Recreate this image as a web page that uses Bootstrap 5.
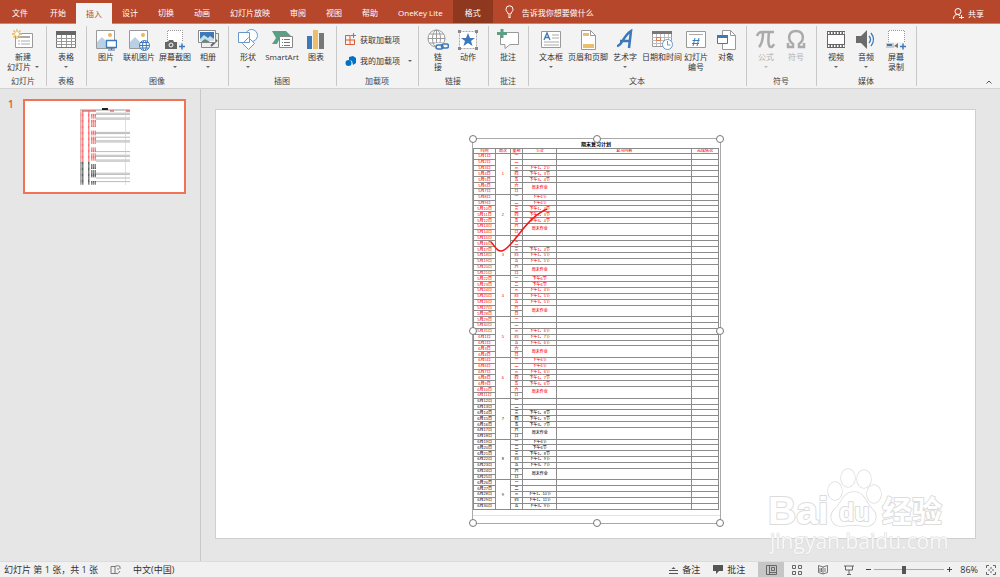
<!DOCTYPE html>
<html lang="zh-CN">
<head>
<meta charset="utf-8">
<meta name="viewport" content="width=device-width, initial-scale=1">
<title>演示文稿</title>
<link href="https://cdn.jsdelivr.net/npm/bootstrap@5.3.0/dist/css/bootstrap.min.css" rel="stylesheet">
<style>
body{font:8px/10px "Open Sans","Noto Sans CJK SC",sans-serif;color:#333;background:#e6e6e6}
button,input{font:inherit;color:inherit}
svg{display:block;flex:none}
.topbar{background:#b7472a;color:#fff;height:24px;border-bottom:1px solid #d08470}
.topbar .nav-link{color:#fff;padding:2px 10px 0;height:23px;display:flex;align-items:center;font-size:8px}
.topbar .first-tab{padding:2px 12px 0}
.topbar .nav-link.active{background:#f3f3f3;color:#b7472a;margin-top:3px;height:21px;padding:0 10px}
.topbar .context-tab{background:#8f3820;padding:2px 12px 0}
.tell{background:none;border:0;color:#fff;width:110px;padding:2px 0 0;outline:0}
.tell::placeholder{color:#fff;opacity:1}
.plain{background:none;border:0;padding:0}
.ribbon{background:#f3f3f3;height:65px;border-bottom:1px solid #d2d2d2;padding-left:1px}
.group{padding:3px 5px 0 4px;border-right:1px solid #c8c8c8;margin:2px 0;height:60px}
.group-name{text-align:center;height:10px;color:#444;white-space:nowrap}
.tool{background:none;border:0;padding:0;width:30px;display:flex;flex-direction:column;align-items:center;white-space:nowrap;line-height:10px}
.tool svg{margin-bottom:1px}
.tool.mid{width:36px}
.tool.wide{width:38px}
.tool:disabled{color:#b1b1b1}
.arrow{display:block;border:2px solid transparent;border-top-color:#666;border-bottom:0}
.tool>.arrow{margin-top:4px}
.tool:disabled .arrow{border-top-color:#bbb}
.addins{width:72px}
.thumbs{width:201px;border-right:1px solid #c9c9c9;padding:10px 14px 10px 8px}
.thumb-no{width:15px;color:#e0593a;font-size:10px;font-weight:600}
.thumb{background:#fff;border:2px solid #f07355;height:95px;flex:1;display:flex;justify-content:center;padding-top:7px}
.stage{padding:20px 24px 22px 14px}
.slide{background:#fff;border:1px solid #cfcfcf}
.object{left:34%;margin-left:-1px;top:29px;width:247px;height:384px;outline:1px solid #aaa}
.plan{width:246px;height:362px;margin:0;table-layout:fixed;border-collapse:collapse;font:4px/4px "Liberation Sans","Noto Sans CJK SC",sans-serif;color:#111;text-align:center}
.plan caption{caption-side:top;padding:2px 0 1px;height:9px;font:bold 5px/6px "Noto Sans CJK SC",sans-serif;color:#000;text-align:center}
.plan th,.plan td{padding:0;border:1px solid #8b8b8b;font-weight:500;overflow:hidden;white-space:nowrap}
.plan .due{color:#f00}
.blank{height:6px;border-bottom:1px solid #e4e4e4}
.grip{width:8px;height:8px;border:1px solid #777;border-radius:50%;background:#fff;transform:translate(-50%,-50%)}
.tick{left:16px;top:66px}
.watermark{right:23px;bottom:4px;pointer-events:none}
.status{background:#f1f1f1;height:16px;border-top:1px solid #dcdcdc;font-size:9px}
.note{margin-right:13px}
.view{width:26px;height:16px;display:flex;align-items:center;justify-content:center;background:none;border:0;padding:0}
.view.on{background:#c6c6c6}
.zoomer{appearance:none;width:70px;height:9px;margin:0 3px;background:linear-gradient(#aaa,#aaa) center/100% 1px no-repeat}
.zoomer::-webkit-slider-thumb{appearance:none;width:4px;height:8px;background:#555}
</style>
</head>
<body class="d-flex flex-column min-vh-100">
<header>
<nav class="topbar d-flex" aria-label="功能区">
  <div class="nav flex-nowrap text-nowrap">
    <a class="nav-link first-tab" href="#">文件</a><a class="nav-link" href="#">开始</a><a class="nav-link active" href="#">插入</a><a class="nav-link" href="#">设计</a><a class="nav-link" href="#">切换</a><a class="nav-link" href="#">动画</a><a class="nav-link" href="#">幻灯片放映</a><a class="nav-link" href="#">审阅</a><a class="nav-link" href="#">视图</a><a class="nav-link" href="#">帮助</a><a class="nav-link" href="#">OneKey Lite</a><a class="nav-link context-tab" href="#">格式</a>
  </div>
  <label class="d-flex align-items-center gap-2 ms-2 ps-1">
    <svg width="9" height="13" viewBox="0 0 9 13" fill="none" stroke="#fff"><path d="M3 9V8C2 6.500 1 6 1 4.300A3.500 3.500 0 0 1 8 4.300C8 6 7 6.500 6 8v1zM3 11h3M3.500 12.500h2"/></svg>
    <input class="tell" placeholder="告诉我你想要做什么" aria-label="告诉我你想要做什么">
  </label>
  <button class="plain text-white d-flex align-items-center gap-1 ms-auto me-3 pt-1"><svg width="11" height="11" viewBox="0 0 11 11" fill="none" stroke="#fff"><circle cx="5" cy="3.500" r="3"/><path d="M.5 11C.5 8 2 6.500 4.500 6.500L7 7.500M6 9.500h5M8.500 7v4"/></svg>共享</button>
</nav>
<div class="ribbon d-flex">
  <section class="group d-flex flex-column justify-content-between">
    <div class="d-flex"><button class="tool mid"><svg width="22" height="22" viewBox="0 0 22 22"><path d="M3.500 4.500h17v14h-17z" fill="#fff" stroke="#999"/><path d="M6 8h12" stroke="#aaa" stroke-width="2"/><path d="M6 12h2m1 0h9M6 15h2m1 0h9" stroke="#aaa"/><path d="M5 0v10M0 5h10M1.500 1.500l7 7M8.500 1.500l-7 7" stroke="#e9b659" stroke-width="1.300"/><circle cx="5" cy="5" r="2" fill="#fff"/></svg>新建<span class="d-flex align-items-center gap-1">幻灯片<i class="arrow"></i></span></button></div>
    <div class="group-name">幻灯片</div>
  </section>
  <section class="group d-flex flex-column justify-content-between">
    <div class="d-flex"><button class="tool"><svg width="22" height="22" viewBox="0 0 22 22"><path d="M1.500 2.500h19v16h-19z" fill="#fff" stroke="#777"/><path d="M1 2h20v4H1z" fill="#666"/><path d="M1 9.500h20M1 12.500h20M1 15.500h20M6.500 6v12M11.500 6v12M16.500 6v12" stroke="#999"/></svg>表格<i class="arrow"></i></button></div>
    <div class="group-name">表格</div>
  </section>
  <section class="group d-flex flex-column justify-content-between">
    <div class="d-flex">
      <button class="tool"><svg width="22" height="22" viewBox="0 0 22 22"><path d="M1.500 1.500h18v18h-18z" fill="#fff" stroke="#999"/><path d="M2 19v-6l5-5 6 6v5z" fill="#b9cfe5"/><circle cx="15" cy="6" r="2" fill="#e9b659"/><path d="M11.500 11.500h10v7h-10z" fill="#fff" stroke="#3d79b8" stroke-width="1.300"/><path d="M16.500 19v2M13 21h7" stroke="#3d79b8"/></svg>图片</button>
      <button class="tool mid"><svg width="22" height="22" viewBox="0 0 22 22"><path d="M1.500 1.500h18v18h-18z" fill="#fff" stroke="#999"/><path d="M2 19v-6l5-5 6 6v5z" fill="#b9cfe5"/><circle cx="15" cy="6" r="2" fill="#e9b659"/><g fill="#fff" stroke="#3d79b8"><circle cx="16.500" cy="16.500" r="5"/><ellipse cx="16.500" cy="16.500" rx="2" ry="5"/><path d="M11.500 16.500h10M12.500 13.500h8M12.500 19h8"/></g></svg>联机图片</button>
      <button class="tool mid"><svg width="22" height="22" viewBox="0 0 22 22"><path d="M3.500 13V1.500h15V13" fill="#fff" stroke="#999" stroke-dasharray="1 1"/><path d="M1 13h3l1-2h4l1 2h3v7H1z" fill="#666"/><circle cx="7" cy="16" r="2" fill="#666" stroke="#fff"/><path d="M15 17.500h6M18 14.500v6" stroke="#3d79b8" stroke-width="1.500"/></svg>屏幕截图<i class="arrow"></i></button>
      <button class="tool"><svg width="22" height="22" viewBox="0 0 22 22"><path d="M4.500 4.500h17v14h-17z" fill="#eee" stroke="#888"/><path d="M14 17l6-6" stroke="#666" stroke-width="2"/><path d="M1.500 1.500h17v12h-17z" fill="#fff" stroke="#888"/><path d="M3 3h14v7H3z" fill="#3d79b8"/><path d="M3 10l4-4 4 3 2-2 4 3v2H3z" fill="#cbdce9"/><path d="M4 13l4-3 5 3z" fill="#4e9277"/></svg>相册<i class="arrow"></i></button>
    </div>
    <div class="group-name">图像</div>
  </section>
  <section class="group d-flex flex-column justify-content-between">
    <div class="d-flex">
      <button class="tool"><svg width="22" height="22" viewBox="0 0 22 22" fill="#fff" stroke="#6a99c9"><circle cx="14.500" cy="6.500" r="6"/><path d="M1.500 3.500h11v10h-11zM11.500 8.500l6 6-6 6-6-6z"/></svg>形状<i class="arrow"></i></button>
      <button class="tool wide"><svg width="22" height="22" viewBox="0 0 22 22"><path d="M1 2h14l5 5H10l-4 8H1l4-6z" fill="#5b9f85"/><path d="M8.500 7.500h13v11h-13z" fill="#fff" stroke="#888"/><path d="M11 10.500h1m1 0h6m-8 3h1m1 0h6m-8 3h1m1 0h6" stroke="#777"/></svg>SmartArt</button>
      <button class="tool"><svg width="22" height="22" viewBox="0 0 22 22"><path d="M2 7h5v13H2z" fill="#3d79b8"/><path d="M8 1h5v19H8z" fill="#e9bf6c"/><path d="M14 4h5v16h-5z" fill="#777"/></svg>图表</button>
    </div>
    <div class="group-name">插图</div>
  </section>
  <section class="group d-flex flex-column justify-content-between">
    <div class="addins d-flex flex-column align-items-start gap-2 ps-1 text-nowrap">
      <button class="plain d-flex align-items-center gap-1 pt-1"><svg width="11" height="13" viewBox="0 0 11 13" fill="none" stroke="#dc5b32"><path d="M5.500 2.500h-5v9h9v-5M.5 7h9M5 2.500v9M8.500 0v5M6 2.500h5"/></svg>获取加载项</button>
      <button class="plain d-flex align-items-center gap-1"><svg width="11" height="13" viewBox="0 0 11 13"><path d="M4 3l4-1 3 2v5l-3 2-1-4-3-1z" fill="#0072c6"/><circle cx="3.500" cy="9" r="3" fill="#0072c6"/></svg>我的加载项<i class="arrow ms-1"></i></button>
    </div>
    <div class="group-name">加载项</div>
  </section>
  <section class="group d-flex flex-column justify-content-between">
    <div class="d-flex">
      <button class="tool"><svg width="22" height="22" viewBox="0 0 22 22" fill="none"><g stroke="#999"><circle cx="9.500" cy="9.500" r="8.500" fill="#fff"/><ellipse cx="9.500" cy="9.500" rx="4" ry="8.500"/><path d="M1 9.500h17M2.500 5h14M2.500 14h14M9.500 1v17"/></g><path d="M8 14h14v8H8z" fill="#f3f3f3"/><g stroke="#3d79b8" stroke-width="1.600"><rect x="9" y="16" width="7" height="4" rx="2"/><rect x="14.500" y="15" width="7" height="4" rx="2"/></g></svg>链<br>接</button>
      <button class="tool"><svg width="22" height="22" viewBox="0 0 22 22"><path d="M2.500 2.500h17v17h-17z" fill="#fff" stroke="#aaa" stroke-dasharray="2 1"/><path d="M1 1h3v3H1zM18 1h3v3h-3zM1 18h3v3H1zM18 18h3v3h-3z" fill="#888"/><path d="M11 4l2 5h5l-4 3 1.500 5-4.500-3-4.500 3L8 12 4 9h5z" fill="#3d79b8"/></svg>动作</button>
    </div>
    <div class="group-name">链接</div>
  </section>
  <section class="group d-flex flex-column justify-content-between">
    <div class="d-flex"><button class="tool"><svg width="22" height="22" viewBox="0 0 22 22"><path d="M3.500 3.500h18v12H13l-5 4v-4H3.500z" fill="#fff" stroke="#999"/><path d="M5 0v9M0 4.500h10" stroke="#5b9f85" stroke-width="3"/></svg>批注</button></div>
    <div class="group-name">批注</div>
  </section>
  <section class="group d-flex flex-column justify-content-between">
    <div class="d-flex">
      <button class="tool mid"><svg width="22" height="22" viewBox="0 0 22 22"><path d="M1.500 2.500h19v16h-19z" fill="#fff" stroke="#999"/><path d="M12 6h7M12 9h7M4 13h15M4 16h15" stroke="#aaa"/><path d="M4 11l3-7 3 7M5 8.500h4" fill="none" stroke="#3d79b8" stroke-width="1.300"/></svg>文本框<i class="arrow"></i></button>
      <button class="tool wide"><svg width="22" height="22" viewBox="0 0 22 22"><path d="M4.500 1.500h9l5 5v14h-14z" fill="#fff" stroke="#999"/><path d="M13.500 1.500v5h5" fill="none" stroke="#999"/><path d="M6 4h6v3H6zM6 15h11v4H6z" fill="#e9bf6c"/></svg>页眉和页脚</button>
      <button class="tool mid"><svg width="22" height="22" viewBox="0 0 22 22" fill="none" stroke="#3d79b8"><path d="M3 17c5 0 6-10 14-15l-2 17M6 12h10" stroke-width="2.500"/></svg>艺术字<i class="arrow"></i></button>
      <button class="tool wide"><svg width="22" height="22" viewBox="0 0 22 22"><path d="M1.500 2.500h19v15h-19z" fill="#fff" stroke="#999"/><path d="M1 2h20v3H1z" fill="#777"/><path d="M5.500 5v12M9.500 5v12M13.500 5v12M17.500 5v12M1 8.500h20M1 11.500h20M1 14.500h20" stroke="#bbb"/><path d="M5.500 8.500h4v3h-4z" fill="none" stroke="#dc7b52"/><circle cx="16.500" cy="15.500" r="5" fill="#fff" stroke="#6a99c9"/><path d="M16.500 12v4h3" fill="none" stroke="#6a99c9"/></svg>日期和时间</button>
      <button class="tool"><svg width="22" height="22" viewBox="0 0 22 22"><path d="M1.500 2.500h19v16h-19z" fill="#fff" stroke="#999"/><path d="M4 5.500h14" stroke="#aaa"/><path d="M10 9L8 17M14 9l-2 8M7.500 11.500h7M7 14.500h7" stroke="#3d79b8"/></svg>幻灯片<br>编号</button>
      <button class="tool"><svg width="22" height="22" viewBox="0 0 22 22"><path d="M7.500 1.500h8l5 5v14h-13z" fill="#fff" stroke="#999"/><path d="M15.500 1.500v5h5" fill="none" stroke="#999"/><path d="M2.500 6.500h10v8h-10z" fill="#fff" stroke="#3d79b8"/><path d="M2 6h11v3H2z" fill="#3d79b8"/></svg>对象</button>
    </div>
    <div class="group-name">文本</div>
  </section>
  <section class="group d-flex flex-column justify-content-between">
    <div class="d-flex">
      <button class="tool" disabled><svg width="22" height="22" viewBox="0 0 22 22" fill="none" stroke="#aaa" stroke-width="2.500"><path d="M2 7c1-3 2-4 5-4h12M8 3c0 8-1 12-4 15M14 3c-1 9-1 15 2 15 2 0 2-1 3-3"/></svg>公式<i class="arrow"></i></button>
      <button class="tool" disabled><svg width="22" height="22" viewBox="0 0 22 22" fill="none" stroke="#aaa" stroke-width="2.500"><path d="M3 14v4h5v-3c-6-4-5-13 3-13s9 9 3 13v3h5v-4"/></svg>符号</button>
    </div>
    <div class="group-name">符号</div>
  </section>
  <section class="group d-flex flex-column justify-content-between">
    <div class="d-flex">
      <button class="tool"><svg width="22" height="22" viewBox="0 0 22 22"><path d="M2 2h18v17H2z" fill="#666"/><path d="M3 6h16v9H3z" fill="#fff"/><path d="M3 4h17M3 17h17" stroke="#fff" stroke-width="2" stroke-dasharray="1.500 1.500"/></svg>视频<i class="arrow"></i></button>
      <button class="tool"><svg width="22" height="22" viewBox="0 0 22 22"><path d="M1 7h5l6-6v19l-6-6H1z" fill="#6b6b6b"/><path d="M14 7q3 3.500 0 7M16 4q5 6.500 0 13" fill="none" stroke="#3d79b8" stroke-width="1.300"/></svg>音频<i class="arrow"></i></button>
      <button class="tool"><svg width="22" height="22" viewBox="0 0 22 22"><path d="M3.500 13V1.500h16V13" fill="#fff" stroke="#999" stroke-dasharray="1 1"/><path d="M1 14h8v5H1z" fill="#ccc"/><path d="M2 15h5v2H2z" fill="#3d79b8"/><path d="M9 17l4-3v5z" fill="#777"/><path d="M15 17.500h6M18 14.500v6" stroke="#3d79b8" stroke-width="1.500"/></svg>屏幕<br>录制</button>
    </div>
    <div class="group-name">媒体</div>
  </section>
  <button class="plain ms-auto align-self-end me-1 pb-1 pe-1" aria-label="折叠功能区"><svg width="6" height="4" viewBox="0 0 6 4" fill="none" stroke="#555"><path d="M.5 3.500L3 1l2.500 2.500"/></svg></button>
</div>
</header>

<main class="d-flex flex-grow-1">
  <aside class="thumbs flex-shrink-0">
    <div class="d-flex"><span class="thumb-no">1</span><div class="thumb"><svg id="mini" width="50" height="78" viewBox="0 0 50 78" aria-hidden="true"></svg></div></div>
  </aside>
  <section class="stage flex-grow-1 d-flex position-relative">
    <div class="slide flex-grow-1 position-relative">
      <div class="object position-absolute">
        <table class="plan">
          <caption>期末复习计划</caption>
          <colgroup><col style="width:9%"><col style="width:6%"><col style="width:5%"><col style="width:14%"><col style="width:55%"><col style="width:11%"></colgroup>
          <thead><tr class="due"><th>时间</th><th>周次</th><th>星期</th><th>节次</th><th>复习内容</th><th>完成情况</th></tr></thead>
          <tbody id="days"></tbody>
        </table>
        <div class="blank"></div>
        <svg class="tick position-absolute" width="62" height="50" viewBox="0 0 62 50" fill="none" stroke="#f01818" stroke-width="1.500"><path d="M2 37c4 4 6 10 11 9C25 42 35 14 58 4"/></svg>
        <i class="grip position-absolute top-0 start-0"></i><i class="grip position-absolute top-0 start-50"></i><i class="grip position-absolute top-0 start-100"></i>
        <i class="grip position-absolute top-50 start-0"></i><i class="grip position-absolute top-50 start-100"></i>
        <i class="grip position-absolute top-100 start-0"></i><i class="grip position-absolute top-100 start-50"></i><i class="grip position-absolute top-100 start-100"></i>
      </div>
    </div>
    <svg class="watermark position-absolute" width="210" height="90" viewBox="0 0 210 90" fill="#fff" stroke="#dcdcdc" stroke-width="2" paint-order="stroke" stroke-linejoin="round">
      <text x="1" y="57" font-family="Liberation Sans" font-weight="bold" font-size="39">Bai</text>
      <g stroke-width="1.500"><ellipse cx="68" cy="24" rx="7" ry="9"/><ellipse cx="81" cy="11" rx="7" ry="9"/><ellipse cx="97" cy="12" rx="7" ry="9"/><ellipse cx="107" cy="27" rx="7" ry="9"/><path d="M87 25c-11 0-12 11-19 17-8 8-2 18 8 17q11-2 21 0c10 1 16-9 8-17-6-6-8-17-18-17z"/></g>
      <text x="72" y="54" font-family="Liberation Sans" font-weight="bold" font-size="25">du</text>
      <text x="115" y="55" font-family="Noto Sans CJK SC" font-weight="bold" font-size="30">经验</text>
      <text x="3" y="82" font-family="Open Sans" font-size="21" fill="#f8f8f8" stroke="#d9d9d9" stroke-width="1">jingyan.baidu.com</text>
    </svg>
  </section>
</main>

<footer class="status d-flex align-items-center text-nowrap">
  <span class="ps-1">幻灯片 第 1 张，共 1 张</span>
  <button class="plain ms-2 me-2 ps-1" aria-label="拼写检查"><svg width="11" height="10" viewBox="0 0 11 10" fill="none" stroke="#777"><path d="M5 1.500H1v7h4V1.500c1-1 4-1 5 0V4M7 9l1.500-1L10 6M7 4h2M5 8.500h2"/></svg></button>
  <span class="ps-1">中文(中国)</span>
  <button class="plain note d-flex align-items-center gap-1 ms-auto"><svg width="9" height="8" viewBox="0 0 9 8" stroke="#555"><path d="M0 4.500h9M0 7.500h9"/><path d="M2.500 3L4.500 1l2 2z" fill="#555" stroke="none"/></svg>备注</button>
  <button class="plain note d-flex align-items-center gap-1"><svg width="10" height="9" viewBox="0 0 10 9"><path d="M0 0h10v6H6L3 9V6H0z" fill="#555"/></svg>批注</button>
  <button class="view on" aria-label="普通视图"><svg width="11" height="10" viewBox="0 0 11 10" fill="none" stroke="#666"><path d="M.5.5h10v9H.5zM3.500.5v9M3.500 7.500h7M5.500 2.500h3v3h-3z"/></svg></button>
  <button class="view" aria-label="幻灯片浏览"><svg width="10" height="10" viewBox="0 0 10 10" fill="none" stroke="#666"><path d="M.5.5h3v3h-3zM6.500.5h3v3h-3zM.5 6.500h3v3h-3zM6.500 6.500h3v3h-3z"/></svg></button>
  <button class="view" aria-label="阅读视图"><svg width="10" height="10" viewBox="0 0 10 10" fill="none" stroke="#777"><path d="M5 2L.5.5v7L5 9l4.500-1.500v-7zM5 2v7M2 3v4M3.500 3v4M7 3v4"/></svg></button>
  <button class="view" aria-label="幻灯片放映"><svg width="10" height="10" viewBox="0 0 10 10" fill="none" stroke="#666"><path d="M0 1h10M1.500 1v4h7V1M5 5v4M3 9.500h4"/></svg></button>
  <button class="plain ms-1" aria-label="缩小"><svg width="5" height="5" viewBox="0 0 5 5" stroke="#444"><path d="M0 2.500h5"/></svg></button>
  <input class="zoomer" type="range" min="10" max="170" value="77" aria-label="缩放">
  <button class="plain" aria-label="放大"><svg width="5" height="5" viewBox="0 0 5 5" stroke="#444"><path d="M0 2.500h5M2.500 0v5"/></svg></button>
  <span class="ms-2">86%</span>
  <button class="plain ms-2 me-1" aria-label="适应窗口"><svg width="10" height="10" viewBox="0 0 10 10" fill="none" stroke="#666"><path d="M.5 3V.5H3M7 .5h2.500V3M9.500 7v2.500H7M3 9.500H.5V7M5 2v2M5 6v2M2 5h2M6 5h2"/></svg></button>
</footer>
<script src="https://cdn.jsdelivr.net/npm/bootstrap@5.3.0/dist/js/bootstrap.bundle.min.js"></script>
<script>
// Lessons for Monday to Friday of each week; the weekend is one merged entry.
const weeks = [
  ['', '', '1、2', '1、3', '3、4'], ['6', '6', '1、4', '1、3', '3、4'], ['', '', '1、4', '1、5', '3、5'],
  ['6', '6', '1、4', '1、5', '3、5'], ['', '', '1、6', '1、7', '3、6'], ['6', '6', '1、6', '1、7', '3、6'],
  ['', '', '1、8', '1、9', '3、7'], ['6', '6', '1、8', '1、9', '3、7'], ['', '', '1、10', '1、11', '3、9']
];
let rows = '', mini = '<rect y="1" width="50" height="2" fill="#ccc"/><path d="M22 1h6" stroke="#222" stroke-width="2"/><path d="M2 3h14M30 3h4M46 3h4" stroke="#e33"/>';
for (let n = 0; n < 61; n++) {
  const w = Math.floor(n / 7), d = n % 7, red = n < 42;
  const date = n < 31 ? `5月${n + 1}日` : `6月${n - 30}日`;
  const rest = d === 5 ? ' rowspan="2"' : '';
  const lesson = d === 5 ? '周末作业' : weeks[w][d] ? `下午${weeks[w][d]}节` : '';
  rows += `<tr class="${red ? 'due' : ''}"><td>${date}</td>` +
    (d === 0 ? `<td rowspan="${Math.min(7, 61 - n)}">${w + 1}</td>` : '') +
    `<td>${'一二三四五六日'[d]}</td>` +
    (d < 6 ? `<td${rest}>${lesson}</td><td${rest}></td><td${rest}></td>` : '') + '</tr>';
  const y = 4 + n * 1.2, c = red ? '#f33' : '#222';
  mini += `<path d="M0 ${y}h4M8 ${y}h2${lesson ? `M11 ${y}h5` : ''}" stroke="${c}" stroke-opacity=".8" stroke-dasharray="1.500 .5"/>`;
  if ([1,2,5,6,17,18,21,24,25,33,36,37,40,41,51,52,55,58].includes(n)) mini += `<path d="M16 ${y}h34" stroke="#bbb"/>`;
}
document.getElementById('days').innerHTML = rows;
document.getElementById('mini').innerHTML = mini + '<path d="M45.500 3v74M.5 3v74" stroke="#ccc" stroke-opacity=".6"/>';
</script>
</body>
</html>
